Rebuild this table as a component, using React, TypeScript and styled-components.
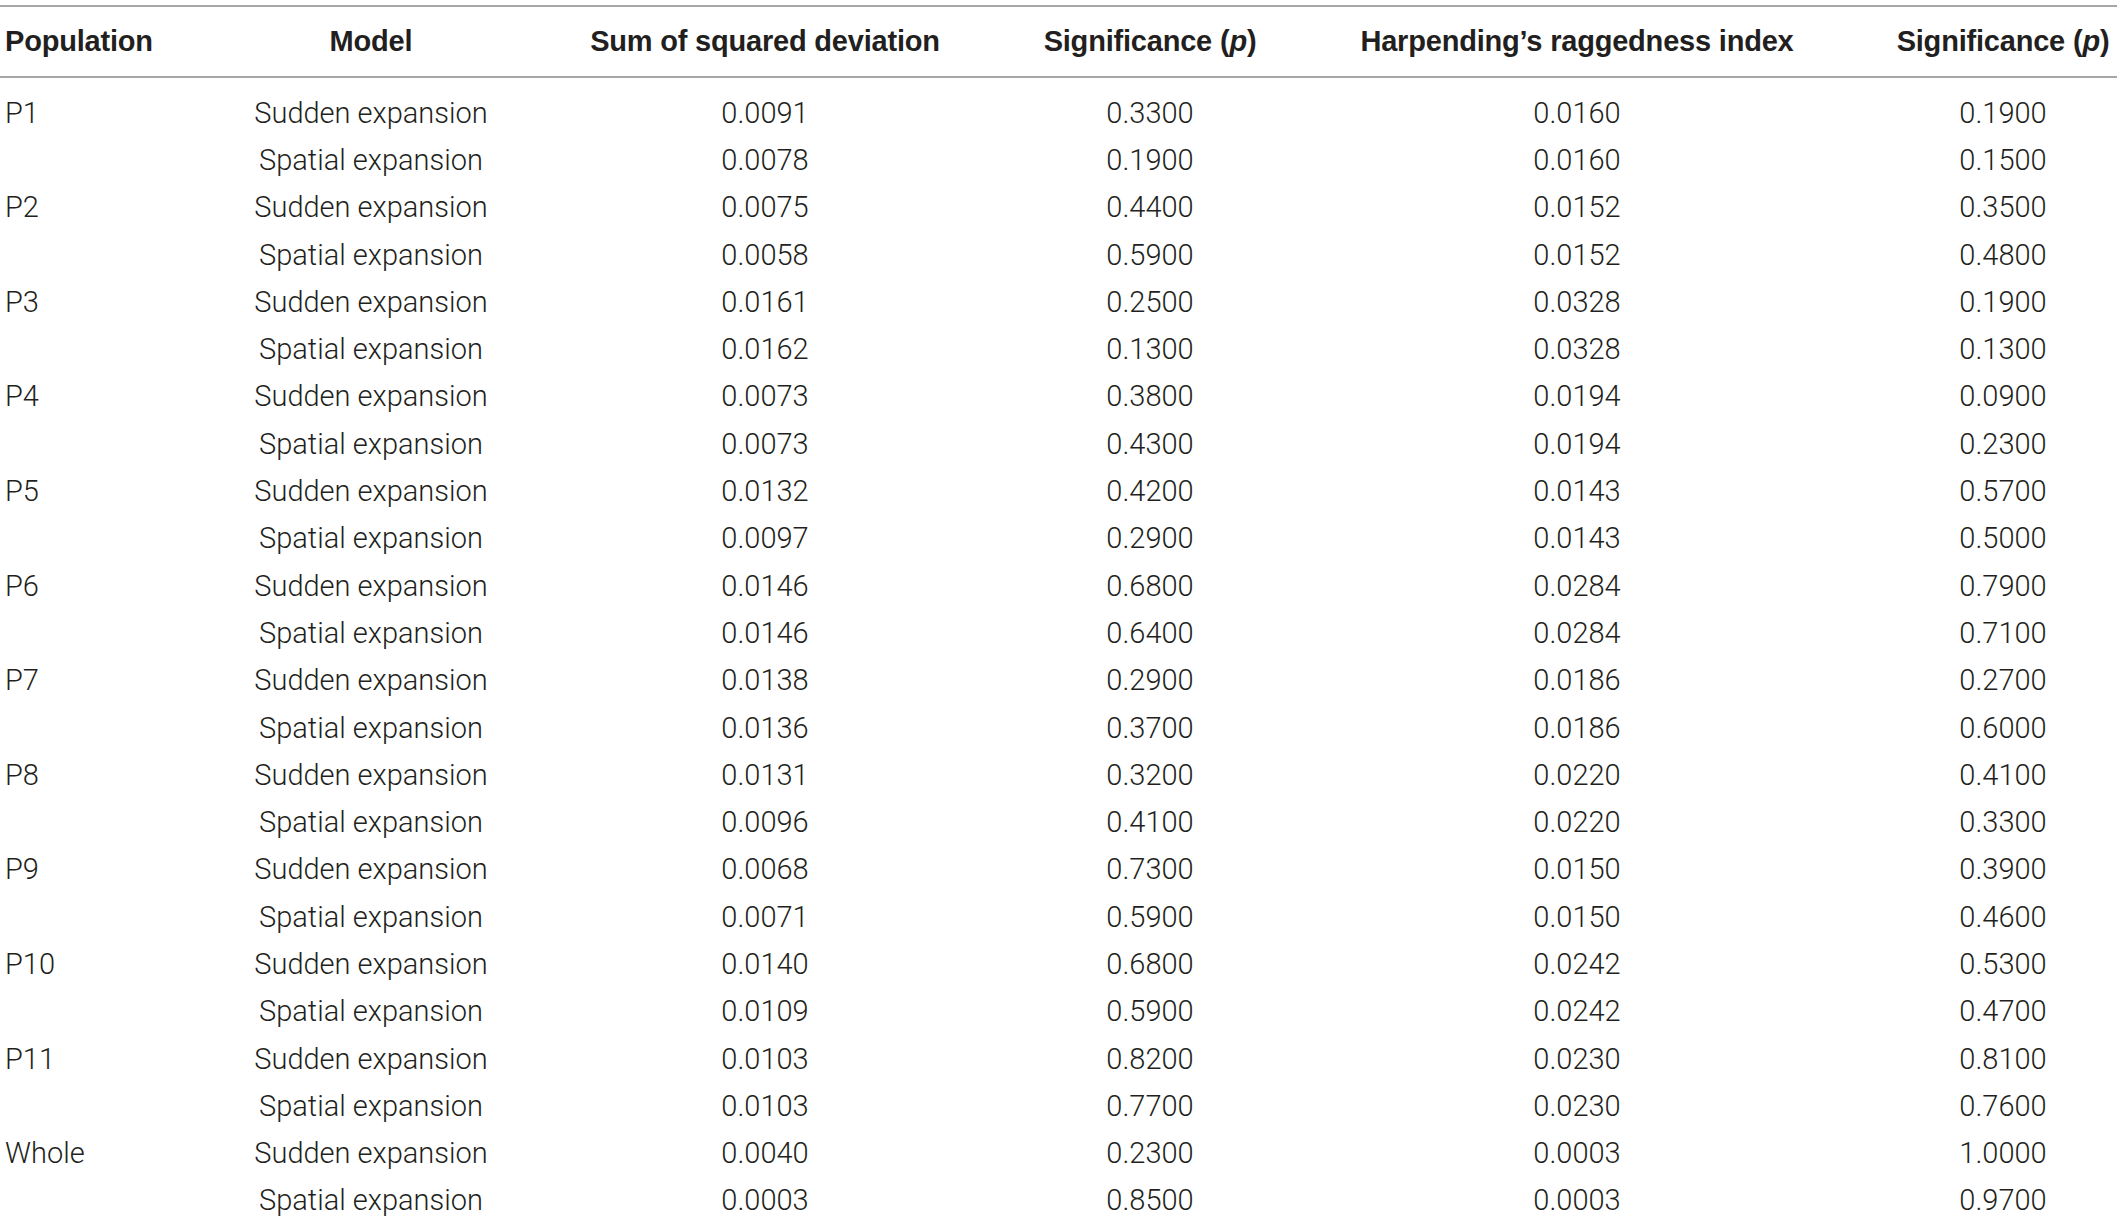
import styled, { createGlobalStyle } from 'styled-components';

const GlobalStyle = createGlobalStyle`
  html, body {
    margin: 0;
    padding: 0;
    background: #ffffff;
  }
`;

const COLUMNS = '252px 238px 550px 220px 634px 218px';

const TableWrap = styled.div`
  width: 2117px;
  padding-top: 5px;
  font-family: Roboto, 'Liberation Sans', sans-serif;
  color: #231f20;
`;

const HeaderRow = styled.div`
  display: grid;
  grid-template-columns: ${COLUMNS};
  height: 69px;
  border-top: 2px solid #a7a7a7;
  border-bottom: 2px solid #a7a7a7;
  margin-bottom: 11px;
`;

const Body = styled.div`
  display: flex;
  flex-direction: column;
`;

const Row = styled.div`
  display: grid;
  grid-template-columns: ${COLUMNS};
  height: 47.3px;
`;

const Cell = styled.div<{ $left?: boolean; $head?: boolean }>`
  display: flex;
  align-items: center;
  justify-content: ${(p) => (p.$left ? 'flex-start' : 'center')};
  padding-left: ${(p) => (p.$left ? '5px' : '0')};
  white-space: nowrap;
  font-family: ${(p) => (p.$head ? "'Liberation Sans', Arial, sans-serif" : "Roboto, 'Liberation Sans', sans-serif")};
  font-size: 29px;
  font-weight: ${(p) => (p.$head ? 700 : 300)};
  letter-spacing: ${(p) => (p.$head ? '-0.2px' : '0')};
`;

const Italic = styled.i`
  font-style: italic;
`;

type Entry = {
  pop: string;
  sudden: [string, string, string, string];
  spatial: [string, string, string, string];
};

const data: Entry[] = [
  { pop: 'P1', sudden: ['0.0091', '0.3300', '0.0160', '0.1900'], spatial: ['0.0078', '0.1900', '0.0160', '0.1500'] },
  { pop: 'P2', sudden: ['0.0075', '0.4400', '0.0152', '0.3500'], spatial: ['0.0058', '0.5900', '0.0152', '0.4800'] },
  { pop: 'P3', sudden: ['0.0161', '0.2500', '0.0328', '0.1900'], spatial: ['0.0162', '0.1300', '0.0328', '0.1300'] },
  { pop: 'P4', sudden: ['0.0073', '0.3800', '0.0194', '0.0900'], spatial: ['0.0073', '0.4300', '0.0194', '0.2300'] },
  { pop: 'P5', sudden: ['0.0132', '0.4200', '0.0143', '0.5700'], spatial: ['0.0097', '0.2900', '0.0143', '0.5000'] },
  { pop: 'P6', sudden: ['0.0146', '0.6800', '0.0284', '0.7900'], spatial: ['0.0146', '0.6400', '0.0284', '0.7100'] },
  { pop: 'P7', sudden: ['0.0138', '0.2900', '0.0186', '0.2700'], spatial: ['0.0136', '0.3700', '0.0186', '0.6000'] },
  { pop: 'P8', sudden: ['0.0131', '0.3200', '0.0220', '0.4100'], spatial: ['0.0096', '0.4100', '0.0220', '0.3300'] },
  { pop: 'P9', sudden: ['0.0068', '0.7300', '0.0150', '0.3900'], spatial: ['0.0071', '0.5900', '0.0150', '0.4600'] },
  { pop: 'P10', sudden: ['0.0140', '0.6800', '0.0242', '0.5300'], spatial: ['0.0109', '0.5900', '0.0242', '0.4700'] },
  { pop: 'P11', sudden: ['0.0103', '0.8200', '0.0230', '0.8100'], spatial: ['0.0103', '0.7700', '0.0230', '0.7600'] },
  { pop: 'Whole', sudden: ['0.0040', '0.2300', '0.0003', '1.0000'], spatial: ['0.0003', '0.8500', '0.0003', '0.9700'] },
];

const DataRow = ({ pop, model, values }: { pop: string; model: string; values: string[] }) => (
  <Row>
    <Cell $left>{pop}</Cell>
    <Cell>{model}</Cell>
    {values.map((v, i) => (
      <Cell key={i}>{v}</Cell>
    ))}
  </Row>
);

export default function App() {
  return (
    <>
      <GlobalStyle />
      <TableWrap>
        <HeaderRow>
          <Cell $left $head>Population</Cell>
          <Cell $head>Model</Cell>
          <Cell $head>Sum of squared deviation</Cell>
          <Cell $head>
            Significance (<Italic>p</Italic>)
          </Cell>
          <Cell $head>Harpending’s raggedness index</Cell>
          <Cell $head>
            Significance (<Italic>p</Italic>)
          </Cell>
        </HeaderRow>
        <Body>
          {data.map((d) => (
            <div key={d.pop}>
              <DataRow pop={d.pop} model="Sudden expansion" values={d.sudden} />
              <DataRow pop="" model="Spatial expansion" values={d.spatial} />
            </div>
          ))}
        </Body>
      </TableWrap>
    </>
  );
}
